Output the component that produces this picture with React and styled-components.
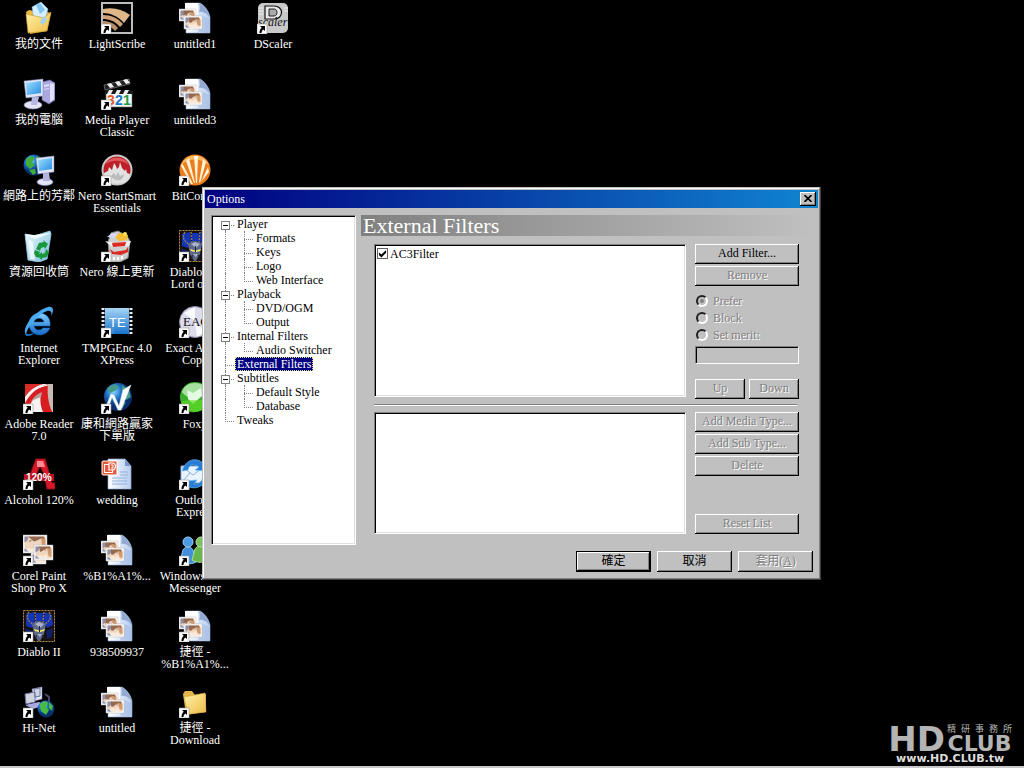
import React from "react";
import styled, { createGlobalStyle, css } from "styled-components";

const GlobalStyle = createGlobalStyle`
  *, *::before, *::after { box-sizing: border-box; }
  body {
    margin: 0;
    background: #000;
    font: 12px/14px "Liberation Serif", "Noto Sans CJK TC", serif;
    color: #000;
  }
  button, input { font: inherit; color: inherit; }
  ul { margin: 0; padding: 0; list-style: none; }
`;

/* ---------- desktop ---------- */

const Desktop = styled.main`
  position: relative;
  min-height: 100vh;
  overflow: hidden;
  background: #000;
  border-bottom: 2px solid #c8c8c8;
`;

const IconGrid = styled.ul`
  display: grid;
  grid-auto-flow: column;
  grid-template-rows: repeat(10, 76px);
  grid-auto-columns: 78px;
  padding-top: 2px;
`;

const Shortcut = styled.button`
  display: flex;
  flex-direction: column;
  align-items: center;
  gap: 4px;
  width: 100%;
  padding: 0;
  border: 0;
  background: none;
  color: #fff;
  line-height: 12px;
`;

const ShortcutLabel = styled.span`
  display: flex;
  flex-direction: column;
  align-items: center;
  white-space: nowrap;
`;

const Glyph = styled.svg`
  display: block;
  width: 32px;
  height: 32px;
`;

const ArrowBadge = () => (
  <g>
    <path d="M0 22h10v10H0z" fill="#fff" stroke="#999" strokeWidth=".6" />
    <path d="M3 24h5v5l-1.600-1.600C5 28.600 4.500 29.500 4.500 31H2.500c0-2.400.7-3.700 2.200-5.200z" fill="#000" />
  </g>
);

const Photo = ({ x, y, w = 17, h = 12 }) => (
  <g transform={`translate(${x} ${y})`}>
    <rect width={w} height={h} fill="#fff" stroke="#b9b4b4" strokeWidth=".5" />
    <rect x="1.500" y="1.500" width={w - 3} height={h - 3} fill="#efd6c0" />
    <path d={`M1.500 1.500h4l-1 4-3 2z`} fill="#8f8fa8" />
    <path d={`M5 1.500h${w - 8}l1 3-4-1-4 2-3 1z`} fill="#94694f" />
    <path d={`M${w - 6} 3l4.500 1v${h - 7}l-3-1z`} fill="#d09a6c" />
    <path d={`M2 ${h - 2}l4-3 3 1 3-2 2 4z`} fill="#fbeadb" />
    <path d={`M1.500 ${h - 1.5}v-3l4 3z`} fill="#7c93bd" />
    <path d="M6 6l2-1 .5 1-2 .7zM10 5l1.500-.5.5 1z" fill="#8b5a46" />
  </g>
);

const PictureFile = () => (
  <g>
    <path d="M7 1h14c4 2 9 8 10 14v16H7z" fill="url(#paper)" stroke="#8ba3cf" strokeWidth=".6" />
    <path d="M20 1c1 4 1 6 0 9 4-1 8 1 11 6-1-6-6-13-11-15z" fill="#93a9d2" />
    <path d="M24 14l6 3v13H19z" fill="#9db6df" opacity=".5" />
    <path d="M6 1h13v12H6z" fill="#fff" />
    <Photo x={0} y={7} />
    <Photo x={5} y={14} w={18} h={13} />
  </g>
);

const Diablo = () => (
  <g>
    <path d="M0 0h32v32H0z" fill="#17100d" />
    <rect x=".5" y=".5" width="31" height="31" fill="none" stroke="#b08a48" strokeDasharray="2 1" />
    <path d="M3 4l8-2 1 9-3 7-6-2zM13 3h7l1 8h-8zM22 2l7 3 1 10-6 3-3-7z" fill="#1434b8" />
    <path d="M2 18l7 3-1 8-5-2zM30 18l-7 3 1 8 5-2z" fill="#101f62" />
    <path d="M6 2c-4 6 0 10 5 13M26 2c4 6 0 10-6 13M12 2l1 11M21 2l-1 11" stroke="#8f7659" strokeWidth="1.500" fill="none" strokeDasharray="2 1" />
    <path d="M9 14c4-4 10-4 14 0l-2 10-4 7h-2l-4-7z" fill="#5d6788" />
    <path d="M12 14l4-2 5 2-4 4zM14 24h5l-2 3z" fill="#a9b2c9" />
    <path d="M11 19l5 1.500v1.500l-4-1zM22 19l-5 1.500v1.500l4-1z" fill="#fff36b" />
    <path d="M12 29l2-4M21 29l-2-4M16.500 16v6" stroke="#20243c" />
  </g>
);

const Screen = ({ x, y, w = 18, h = 15 }) => (
  <g>
    <path d={`M${x} ${y + 2}l${w}-2v${h}l-${w - 2} 2z`} fill="#dfe5f6" stroke="#7d8ab7" strokeWidth=".5" />
    <path d={`M${x + 2} ${y + 4}l${w - 4}-2v${h - 5}l-${w - 5} 2z`} fill="url(#screen)" />
  </g>
);

const pictures = {
  documents: (
    <g>
      <path d="M3 10l3-2 5 1 2-2 15 4-4 18-17 3z" fill="#e9b93c" />
      <path d="M9 5L18 0l7 7-4 15-10-4z" fill="#d7efff" stroke="#6fb3e6" strokeWidth=".6" />
      <path d="M13 3l4-2 5 7-5 4z" fill="#80c5f3" />
      <path d="M3 12l18 4 7-6-4 19L5 31z" fill="url(#folder)" stroke="#c99323" strokeWidth=".6" />
      <path d="M17 20l4-6 3 3-4 6z" fill="#9cd4f5" />
    </g>
  ),
  computer: (
    <g>
      <path d="M19 4l8-2 5 3v17l-6 4-7-4z" fill="#a9a9df" stroke="#6b6bb0" strokeWidth=".6" />
      <path d="M21 7l5-1v2l-5 1zM21 11l5-1v1l-5 1zM27 5l4 1v15l-4 3z" fill="#e2e1fb" />
      <ellipse cx="10" cy="27" rx="9" ry="4" fill="#e5e5f8" stroke="#8585c0" strokeWidth=".6" />
      <path d="M9 18l7 1-2 8H8z" fill="#b7b7e5" />
      <Screen x={1} y={1} w={19} h={17} />
    </g>
  ),
  network: (
    <g>
      <circle cx="11" cy="11" r="10.500" fill="url(#globe)" />
      <path d="M3 5l5-3 4 2-3 4 3 3-5 4-4-4zM13 2l4 2-3 4zM6 16l6-1 1 4-3 2z" fill="#3fae3d" />
      <ellipse cx="22" cy="28" rx="8" ry="3.500" fill="#e6e5f8" stroke="#8787c6" strokeWidth=".6" />
      <path d="M20 18h6l1 9h-7z" fill="#b4b4df" />
      <Screen x={13} y={2} w={18} h={16} />
    </g>
  ),
  recycle: (
    <g>
      <path d="M2 4l9 2 16-5 1 3-4 25-8 3-11-2z" fill="url(#bin)" stroke="#a0d3ec" strokeWidth=".8" />
      <path d="M2 4l10 5 16-6-17 2z" fill="#f5fdff" />
      <path d="M5 9l5 3 2 18-5-1z" fill="#fff" opacity=".7" />
      <path d="M13 19l3-6 5-1-1-2 5 4-3 5-1-2-3 1-1 3zM23 19l3 3-2 5-5 1v2l-5-4 5-4v2l3-1zM12 20l5 2-1 2 2 4-5-1-2-4z" fill="#18983b" />
    </g>
  ),
  explorer: (
    <g>
      <path d="M16 7a11 11 0 1 0 11 15h-7a5 5 0 0 1-9-2h16C28 12 23 7 16 7zm-5 9c1-5 9-5 10 0z" fill="url(#ie)" fillRule="evenodd" stroke="#126ac2" strokeWidth=".6" />
      <path d="M3 29C-2 23 11 5 25 1c6-1 6 4 3 9 1-4 0-6-4-5C15 8 4 21 3 29z" fill="#49aaf0" />
      <path d="M2 27c0 5 6 3 10 0-5 1-8 2-9 0z" fill="#1b76cb" />
    </g>
  ),
  acrobat: (
    <g>
      <path d="M2 2h28v28H2z" fill="#f5f3f1" />
      <path d="M2 2h18C12 4 6 9 2 15z" fill="#dc2b2b" />
      <path d="M22 2h8v28h-3c-3-9-4-19-3-27z" fill="#c9b9b4" />
      <path d="M20 4l5-2c-1 9 0 18 4 28h-9c-3-7-3-14-2-19C13 13 8 19 5 27H2v-6C7 12 13 7 20 4z" fill="#d81c20" />
      <path d="M3 15C9 8 16 5 25 3" stroke="#fff" fill="none" />
      <path d="M19 10c-5 2-8 5-11 9l10-4z" fill="#b6a09c" />
    </g>
  ),
  alcohol: (
    <g>
      <path d="M5 22L13 1h9l7 24h3v6h-8l-3-15-4-8-6 14z" fill="#d81828" stroke="#98101c" />
      <path d="M14 3h6l2 6h-8z" fill="#ff8c93" />
      <path d="M1 16h30v7H1z" fill="#b81020" />
      <text x="3" y="23" fontSize="10" fontFamily="Liberation Sans" fontWeight="bold" fill="#fff">120%</text>
    </g>
  ),
  corel: (
    <g>
      <Photo x={0} y={1} w={24} h={18} />
      <Photo x={8} y={19} w={15} h={11} />
      <Photo x={11} y={11} w={19} h={15} />
    </g>
  ),
  diablo: <Diablo />,
  hinet: (
    <g>
      <path d="M2 19l14-3 6 3-12 4z" fill="#aaa9df" />
      <Screen x={9} y={1} w={10} h={12} />
      <path d="M11 3l6-1v8l-5 1zM2 8l10-2v10l-9 2z" fill="#cfd4df" stroke="#7177a2" />
      <circle cx="23" cy="23" r="8.500" fill="url(#globe)" />
      <path d="M17 18l5-3 3 2-2 4 3 3-3 5-5-4zM26 16l4 4-1 5-3-3z" fill="#48bb3e" />
      <path d="M22 8l4 3v4" stroke="#4c4a69" strokeWidth="2" fill="none" />
    </g>
  ),
  lightscribe: (
    <g>
      <path d="M1 1h30v30H1z" fill="#030303" stroke="#bdbdbd" strokeWidth="2" />
      <path d="M2 7C12 5 21 7 29 13l-6 8C17 14 9 11 2 11z" fill="#dfb889" />
      <path d="M2 13c8 0 15 3 20 9l-3 3C14 19 8 17 2 17z" fill="#cfa276" />
      <path d="M2 19c6 0 11 2 15 7l-3 3c-3-4-7-6-12-6z" fill="#b98e66" />
    </g>
  ),
  mpc: (
    <g>
      <path d="M5 13h26v16H5z" fill="#f8f8f8" stroke="#666" strokeWidth=".6" />
      <path d="M3 7L28 1l1 5L4 12z" fill="#222" stroke="#aaa" strokeWidth=".5" />
      <path d="M6 6l4-1 3 4-4 1zM14 4l4-1 3 4-4 1zM22 2l4-1 3 4-4 1z" fill="#eee" />
      <path d="M5 12h26v4H5z" fill="#171717" />
      <path d="M8 12h4l-2 4H6zM16 12h4l-2 4h-4zM24 12h4l-2 4h-4z" fill="#eee" />
      <g fontFamily="Liberation Sans" fontWeight="bold" fontSize="14">
        <text x="6" y="27" fill="#e65b23">3</text>
        <text x="14" y="27" fill="#1678c5">2</text>
        <text x="22" y="27" fill="#249a41">1</text>
      </g>
    </g>
  ),
  nero: (
    <g>
      <circle cx="16" cy="16" r="14.500" fill="#bd1e27" stroke="#c8c8c8" strokeWidth="2" />
      <path d="M4 10C9 2 23 1 28 11 20 5 11 6 4 10z" fill="#e0595d" />
      <path d="M3 19l4-2 1-4 3 3 2-7 2 3 1 3 2-2 1-5 2 6 3 3 1-2 1 4 3 1c0 6-5 10-13 10S3 27 3 19z" fill="#e2e2e2" />
      <path d="M10 22l3-3 2 3 2-4 2 4 4-2c0 7-9 9-13 2z" fill="#bcbcbc" />
    </g>
  ),
  update: (
    <g>
      <path d="M7 12l3-9 7-2 9 5 3 5-2 17-8 4H9z" fill="#cfcfcf" stroke="#858585" />
      <path d="M6 7l5-4 6 1-2 4z" fill="#d6d6ff" />
      <path d="M14 7l4-4 9 2-1 5-8 1z" fill="#f2bd31" />
      <circle cx="24" cy="4" r="2" fill="#ffe44d" />
      <path d="M4 11l10 2 16-2-2 5-17 1z" fill="#eee" />
      <path d="M11 13l14-1-1 4-12 1zM9 19l4 3 12-2 2-3v5l-7 3-9-1z" fill="#dc2a22" />
      <path d="M12 27h2v3h-2zM16 27h2v3h-2zM20 26h2v3h-2z" fill="#fff" />
    </g>
  ),
  tmpg: (
    <g>
      <path d="M1 2h30v26H1z" fill="#0a1420" />
      <path d="M2 2v26M30 2v26" stroke="#eee" strokeWidth="3" strokeDasharray="2 2" />
      <path d="M4 2h24v26H4z" fill="url(#film)" />
      <path d="M4 12h24M12 2v26" stroke="#80bae8" strokeWidth=".5" />
      <text x="8" y="21" fontFamily="Liberation Sans" fontSize="13" fill="#fff">TE</text>
    </g>
  ),
  netstock: (
    <g>
      <circle cx="17" cy="15" r="14" fill="url(#globe)" />
      <path d="M6 6l8-4 4 3-4 4-6 2zM21 3l7 5 2 7-5 3-4-6zM19 21l6-1-4 7z" fill="#459a8a" />
      <path d="M4 27l6-15 3 1 5 11 4-16 8-5-10 25h-3l-6-13-4 12z" fill="#fff" stroke="#dff5ff" strokeWidth=".5" />
    </g>
  ),
  presentation: (
    <g>
      <path d="M7 1h17l6 7v23H7z" fill="url(#paper)" stroke="#94abd5" strokeWidth=".7" />
      <path d="M24 1v7h6z" fill="#7a98cf" />
      <path d="M11 20h15M11 23h15M11 26h15M19 14h8M19 17h8" stroke="#91b0da" />
      <rect x="1" y="3" width="15" height="14" rx="1" fill="#e75b3c" stroke="#fff" />
      <rect x="3.500" y="6.500" width="8" height="8" fill="none" stroke="#fff" />
      <path d="M8 5h3a3.500 3.500 0 0 1 0 7H8z" fill="#e75b3c" stroke="#fff" strokeWidth="1.200" />
      <path d="M10 7h2v3h-2" stroke="#fff" fill="none" />
    </g>
  ),
  picture: <PictureFile />,
  comet: (
    <g>
      <circle cx="16" cy="16" r="15.500" fill="#ee7e1b" />
      <path d="M3 10C7-1 24-2 30 11c-9-7-19-7-27-1z" fill="#ffba66" />
      <path d="M12 30L2 12l1-3 11 21zM15 29L7 7l3-3 6 25zM17 29L15 2h4l-1 27zM20 28l4-23 3 3-6 21zM22 28l7-15 1 5z" fill="#fff4dc" />
    </g>
  ),
  eac: (
    <g>
      <circle cx="16" cy="16" r="15.500" fill="#dddcec" stroke="#8685a2" />
      <path d="M5 7L16 1v14zM16 17l11 8-9 6z" fill="#fafaff" />
      <text x="4" y="20" fontSize="13" fontFamily="Liberation Serif" fill="#111">EAC</text>
    </g>
  ),
  foxy: (
    <g>
      <circle cx="16" cy="15" r="15" fill="#3cae2e" />
      <path d="M3 10C6-2 26-2 29 10c-6 6-19 10-26 0z" fill="#a6df9e" />
      <path d="M9 17l-1-9 6 3 8-5 1 8-9 8z" fill="#e4fae2" />
      <path d="M2 20c8-4 18 1 28-5-2 19-25 20-28 5z" fill="#5cdd25" opacity=".7" />
    </g>
  ),
  outlook: (
    <g>
      <path d="M2 8h24v17H2z" fill="#eaf4ff" stroke="#88afe0" />
      <path d="M2 8l12 9 12-9M2 25l9-10" stroke="#8db1db" fill="none" />
      <path d="M3 13C7 1 17-1 24 5l2-3 1 11-11-1 4-3C14 5 10 7 9 12zM29 15c-1 12-11 17-18 14l-2 3-1-9 10-1-3 4c5 1 9-3 9-10z" fill="#287ed7" stroke="#6cbcf5" strokeWidth=".7" />
    </g>
  ),
  messenger: (
    <g>
      <path d="M1 27l3-11c2-4 8-4 10 0l3 12c-5 3-13 2-16-1z" fill="#418fdb" stroke="#8bc7f4" />
      <circle cx="9" cy="8" r="5" fill="#4c9ce4" stroke="#9ed0f5" />
      <path d="M13 26l3-11c2-4 9-4 11 0l3 11c-4 3-13 3-17 0z" fill="#69b64c" stroke="#a8df93" />
      <circle cx="22" cy="8" r="5" fill="#79c25d" stroke="#b7e3a6" />
    </g>
  ),
  folder: (
    <g>
      <path d="M4 8l2-3h7l3 4 11-1v18L7 29z" fill="#e4b54a" />
      <path d="M5 11l21-4 1 19-18 2z" fill="url(#folder)" stroke="#d0a13e" strokeWidth=".6" />
    </g>
  ),
  dscaler: (
    <g>
      <rect x="1" y="1" width="30" height="30" rx="5" fill="#c9c9c9" />
      <path d="M8 4h9c10 0 10 13 0 13H8z" fill="#e9e9e9" stroke="#111" strokeWidth="1.200" />
      <path d="M12 7h5c4 0 4 7 0 7h-5z" fill="#aaa" stroke="#222" />
      <path d="M2 6h4M2 9h4M2 12h4M27 6h4M27 9h4" stroke="#eee" />
      <text x="1" y="24" fontSize="12" fontFamily="Liberation Serif" fontStyle="italic" fill="#111">scaler</text>
    </g>
  ),
};

const HiddenSvg = styled.svg`
  position: absolute;
`;

const GradientDefs = () => (
  <HiddenSvg width="0" height="0" aria-hidden="true">
    <defs>
      <linearGradient id="paper"><stop stopColor="#fff" /><stop offset="1" stopColor="#b6cdf0" /></linearGradient>
      <linearGradient id="folder" x2="1" y2="1"><stop stopColor="#fff3a8" /><stop offset="1" stopColor="#eebc48" /></linearGradient>
      <linearGradient id="screen" x2="1" y2="1"><stop stopColor="#9be3ff" /><stop offset="1" stopColor="#2b8be4" /></linearGradient>
      <radialGradient id="globe" cx=".35" cy=".3"><stop stopColor="#8ddcff" /><stop offset=".5" stopColor="#2379cf" /><stop offset="1" stopColor="#08306f" /></radialGradient>
      <linearGradient id="bin" x2="1" y2="1"><stop stopColor="#effbff" /><stop offset="1" stopColor="#79bdde" /></linearGradient>
      <linearGradient id="ie" x2="0" y2="1"><stop stopColor="#83d0ff" /><stop offset="1" stopColor="#1469c7" /></linearGradient>
      <linearGradient id="film" x2="0" y2="1"><stop stopColor="#a6d6f5" /><stop offset="1" stopColor="#1972cd" /></linearGradient>
    </defs>
  </HiddenSvg>
);

const shortcuts = [
  ["documents", ["我的文件"]],
  ["computer", ["我的電腦"]],
  ["network", ["網路上的芳鄰"]],
  ["recycle", ["資源回收筒"]],
  ["explorer", ["Internet", "Explorer"]],
  ["acrobat", ["Adobe Reader", "7.0"], true],
  ["alcohol", ["Alcohol 120%"], true],
  ["corel", ["Corel Paint", "Shop Pro X"], true],
  ["diablo", ["Diablo II"], true],
  ["hinet", ["Hi-Net"], true],
  ["lightscribe", ["LightScribe"], true],
  ["mpc", ["Media Player", "Classic"], true],
  ["nero", ["Nero StartSmart", "Essentials"], true],
  ["update", ["Nero 線上更新"], true],
  ["tmpg", ["TMPGEnc 4.0", "XPress"], true],
  ["netstock", ["康和網路贏家", "下單版"], true],
  ["presentation", ["wedding"]],
  ["picture", ["%B1%A1%..."]],
  ["picture", ["938509937"]],
  ["picture", ["untitled"]],
  ["picture", ["untitled1"]],
  ["picture", ["untitled3"]],
  ["comet", ["BitComet"], true],
  ["diablo", ["Diablo II -", "Lord of ..."], true],
  ["eac", ["Exact Audio", "Copy"], true],
  ["foxy", ["Foxy"], true],
  ["outlook", ["Outlook", "Express"], true],
  ["messenger", ["Windows Live", "Messenger"], true],
  ["picture", ["捷徑 -", "%B1%A1%..."], true],
  ["folder", ["捷徑 -", "Download"], true],
  ["dscaler", ["DScaler"], true],
];

/* ---------- watermark ---------- */

const Watermark = styled.div`
  position: absolute;
  right: 12px;
  bottom: 2px;
  display: flex;
  flex-direction: column;
  align-items: center;
  color: #b4b4b4;
  font-family: "DejaVu Sans", "Noto Sans CJK TC", sans-serif;
  font-weight: bold;
`;

const Brand = styled.div`
  display: flex;
  align-items: flex-end;
  gap: 2px;
`;

const BrandLarge = styled.span`
  font-size: 34px;
  line-height: 30px;
`;

const BrandSide = styled.span`
  display: flex;
  flex-direction: column;
  align-items: center;
`;

const BrandName = styled.span`
  font-size: 22px;
  line-height: 20px;
`;

const BrandChinese = styled.span`
  font: 9px/10px "Liberation Sans", "Noto Sans CJK TC", sans-serif;
  white-space: pre;
`;

const BrandUrl = styled.span`
  font-size: 11px;
  line-height: 10px;
  color: #ddd;
`;

/* ---------- dialog ---------- */

const WindowLayer = styled.div`
  position: absolute;
  inset: 0;
  display: grid;
  place-items: center;
  padding-right: 1px;
  pointer-events: none;
`;

const Dialog = styled.section`
  pointer-events: auto;
  width: 619px;
  max-width: 100%;
  padding: 3px;
  background: #c0c0c0;
  box-shadow: inset -1px -1px #404040, inset 1px 1px #c0c0c0, inset -2px -2px #808080, inset 2px 2px #fff;
`;

const TitleBar = styled.header`
  display: flex;
  align-items: center;
  justify-content: space-between;
  height: 18px;
  padding: 0 2px;
  color: #fff;
  background: linear-gradient(90deg, #000080, #1084d0);
`;

const TitleText = styled.h1`
  margin: 0;
  font: inherit;
`;

const raised = css`
  border: 0;
  background: #c0c0c0;
  box-shadow: inset -1px -1px #000, inset 1px 1px #fff, inset -2px -2px #808080;
`;

const CloseButton = styled.button`
  ${raised}
  display: grid;
  place-items: center;
  width: 16px;
  height: 14px;
  padding: 0;
`;

const Body = styled.div`
  padding: 7px 5px 5px 6px;
`;

const Panes = styled.div`
  display: flex;
  gap: 5px;
`;

const SunkenBox = styled.div`
  border: 1px solid;
  border-color: #808080 #fff #fff #808080;
  box-shadow: inset 1px 1px #000, inset -1px -1px #dfdfdf;
  background: #fff;
`;

const Tree = styled(SunkenBox).attrs({ as: "ul" })`
  flex: 0 0 145px;
  min-height: 330px;
  padding: 1px 1px 1px 4px;
`;

const TreeRow = styled.li`
  display: flex;
  height: 14px;
`;

const Guide = styled.span`
  position: relative;
  width: 19px;
  height: 14px;
  &::before {
    content: "";
    position: absolute;
    left: 9px;
    top: ${(p) => (p.$first ? 8 : 0)}px;
    height: ${(p) => (p.$last ? 9 : p.$first ? 6 : 14)}px;
    border-left: 1px dotted #808080;
  }
  &::after {
    content: "";
    position: absolute;
    left: 9px;
    top: 8px;
    width: 9px;
    border-top: ${(p) => (p.$branch ? 1 : 0)}px dotted #808080;
  }
`;

const Expander = styled.button`
  position: relative;
  z-index: 1;
  display: block;
  width: 9px;
  height: 9px;
  margin: 4px 5px 0;
  padding: 3px 1px;
  border: 1px solid #808080;
  background: #fff;
  &::before {
    content: "";
    display: block;
    height: 1px;
    background: #000;
  }
`;

const TreeLabel = styled.span`
  padding: 0 2px;
  white-space: nowrap;
  color: ${(p) => (p.$selected ? "#fff" : "#000")};
  background: ${(p) => (p.$selected ? "#000080" : "none")};
  outline: ${(p) => (p.$selected ? "1px dotted #e8e080" : "none")};
  outline-offset: -1px;
`;

const tree = [
  ["Player", 0, true],
  ["Formats", 1],
  ["Keys", 1],
  ["Logo", 1],
  ["Web Interface", 1],
  ["Playback", 0, true],
  ["DVD/OGM", 1],
  ["Output", 1],
  ["Internal Filters", 0, true],
  ["Audio Switcher", 1],
  ["External Filters", 0],
  ["Subtitles", 0, true],
  ["Default Style", 1],
  ["Database", 1],
  ["Tweaks", 0],
];

const Page = styled.div`
  flex: 1;
  min-width: 0;
`;

const PageTitle = styled.h2`
  margin: 0;
  padding-left: 2px;
  font-size: 22px;
  font-weight: normal;
  line-height: 21px;
  color: #fff;
  background: linear-gradient(90deg, #808080, #c0c0c0);
`;

const PageContent = styled.div`
  padding: 8px 14px 0 13px;
`;

const Section = styled.div`
  display: grid;
  grid-template-columns: 1fr 104px;
  column-gap: 9px;
  align-items: start;
`;

const FilterList = styled(SunkenBox)`
  height: ${(p) => p.$height}px;
  padding: 1px 2px;
`;

const Separator = styled.hr`
  height: 2px;
  margin: 5px 2px 6px 0;
  border: 0;
  border-top: 1px solid #808080;
  border-bottom: 1px solid #fff;
`;

const Option = styled.label`
  display: flex;
  align-items: center;
  gap: 2px;
  height: 16px;
`;

const CheckBox = styled.input.attrs({ type: "checkbox" })`
  appearance: none;
  width: 11px;
  height: 11px;
  margin: 0;
  border: 1px solid #606060;
  background: #fff;
  &:checked::before {
    content: "";
    display: block;
    width: 9px;
    height: 9px;
    background: #000;
    clip-path: polygon(10% 38%, 38% 62%, 90% 10%, 90% 42%, 38% 95%, 10% 68%);
  }
`;

const etched = css`
  color: #808080;
  text-shadow: 1px 1px #fff;
`;

const RadioOption = styled(Option)`
  ${etched}
  gap: 5px;
  height: 17px;
  padding-left: 1px;
`;

const Radio = styled.input.attrs({ type: "radio" })`
  appearance: none;
  display: grid;
  place-items: center;
  width: 12px;
  height: 12px;
  margin: 0;
  border: 2px solid;
  border-color: #202020 #fff #fff #202020;
  border-radius: 50%;
  &:checked::before {
    content: "";
    width: 4px;
    height: 4px;
    border-radius: 50%;
    background: #808080;
  }
`;

const MeritInput = styled.input`
  display: block;
  width: 100%;
  height: 18px;
  padding: 0 2px;
  border: 1px solid;
  border-color: #808080 #fff #fff #808080;
  box-shadow: inset 1px 1px #000;
  background: #c0c0c0;
`;

const Button = styled.button`
  ${raised}
  height: 20px;
  padding: 0 0 2px;
  white-space: nowrap;
  &:disabled { ${etched} }
`;

const FooterButton = styled(Button)`
  width: 75px;
  height: 21px;
  padding: 0;
  border: ${(p) => (p.$primary ? "1px solid #000" : "0")};
`;

const Column = styled.div`
  display: flex;
  flex-direction: column;
  gap: ${(p) => p.$gap}px;
  height: ${(p) => (p.$height ? `${p.$height}px` : "auto")};
`;

const ButtonPair = styled.div`
  display: grid;
  grid-template-columns: 1fr 1fr;
  gap: 4px;
  margin-top: 15px;
`;

const RadioGroup = styled.div`
  margin: 7px 0 2px;
`;

const ResetButton = styled(Button)`
  margin-top: auto;
`;

const Footer = styled.footer`
  display: flex;
  justify-content: flex-end;
  gap: 6px;
  margin-top: 6px;
`;

function FilterTree() {
  const lastRoot = tree.length - 1;
  return (
    <Tree aria-label="Option pages">
      {tree.map(([label, depth, open], i) => {
        const lastChild = depth === 1 && (!tree[i + 1] || tree[i + 1][1] === 0);
        return (
          <TreeRow key={label}>
            <Guide $first={i === 0} $last={i === lastRoot} $branch={depth === 0}>
              {open && <Expander aria-label={`Collapse ${label}`} aria-expanded="true" />}
            </Guide>
            {depth === 1 && <Guide $last={lastChild} $branch />}
            <TreeLabel $selected={label === "External Filters"}>{label}</TreeLabel>
          </TreeRow>
        );
      })}
    </Tree>
  );
}

function OptionsDialog() {
  return (
    <Dialog role="dialog" aria-labelledby="options-title">
      <TitleBar>
        <TitleText id="options-title">Options</TitleText>
        <CloseButton aria-label="Close">
          <svg width="8" height="7" viewBox="0 0 8 7" aria-hidden="true">
            <path d="M.5 0l7 7M7.500 0l-7 7" stroke="#000" strokeWidth="1.600" />
          </svg>
        </CloseButton>
      </TitleBar>
      <Body>
        <Panes>
          <FilterTree />
          <Page>
            <PageTitle>External Filters</PageTitle>
            <PageContent>
              <Section>
                <FilterList $height={153}>
                  <Option>
                    <CheckBox defaultChecked />
                    AC3Filter
                  </Option>
                </FilterList>
                <Column $gap={0}>
                  <Column $gap={2}>
                    <Button>Add Filter...</Button>
                    <Button disabled>Remove</Button>
                  </Column>
                  <RadioGroup role="radiogroup" aria-label="Filter preference">
                    <RadioOption><Radio name="merit" defaultChecked disabled />Prefer</RadioOption>
                    <RadioOption><Radio name="merit" disabled />Block</RadioOption>
                    <RadioOption><Radio name="merit" disabled />Set merit:</RadioOption>
                  </RadioGroup>
                  <MeritInput aria-label="Merit value" disabled />
                  <ButtonPair>
                    <Button disabled>Up</Button>
                    <Button disabled>Down</Button>
                  </ButtonPair>
                </Column>
              </Section>
              <Separator />
              <Section>
                <FilterList $height={122} />
                <Column $gap={2} $height={122}>
                  <Button disabled>Add Media Type...</Button>
                  <Button disabled>Add Sub Type...</Button>
                  <Button disabled>Delete</Button>
                  <ResetButton disabled>Reset List</ResetButton>
                </Column>
              </Section>
            </PageContent>
          </Page>
        </Panes>
        <Footer>
          <FooterButton $primary>確定</FooterButton>
          <FooterButton>取消</FooterButton>
          <FooterButton disabled>套用(<u>A</u>)</FooterButton>
        </Footer>
      </Body>
    </Dialog>
  );
}

export default function App() {
  return (
    <Desktop>
      <GlobalStyle />
      <GradientDefs />
      <IconGrid>
        {shortcuts.map(([picture, lines, linked], i) => (
          <li key={i}>
            <Shortcut>
              <Glyph viewBox="0 0 32 32" aria-hidden="true">
                {pictures[picture]}
                {linked && <ArrowBadge />}
              </Glyph>
              <ShortcutLabel>
                {lines.map((line) => <span key={line}>{line}</span>)}
              </ShortcutLabel>
            </Shortcut>
          </li>
        ))}
      </IconGrid>
      <Watermark>
        <Brand>
          <BrandLarge>HD</BrandLarge>
          <BrandSide>
            <BrandChinese>精  研  事  務  所</BrandChinese>
            <BrandName>CLUB</BrandName>
          </BrandSide>
        </Brand>
        <BrandUrl>www.HD.CLUB.tw</BrandUrl>
      </Watermark>
      <WindowLayer>
        <OptionsDialog />
      </WindowLayer>
    </Desktop>
  );
}
